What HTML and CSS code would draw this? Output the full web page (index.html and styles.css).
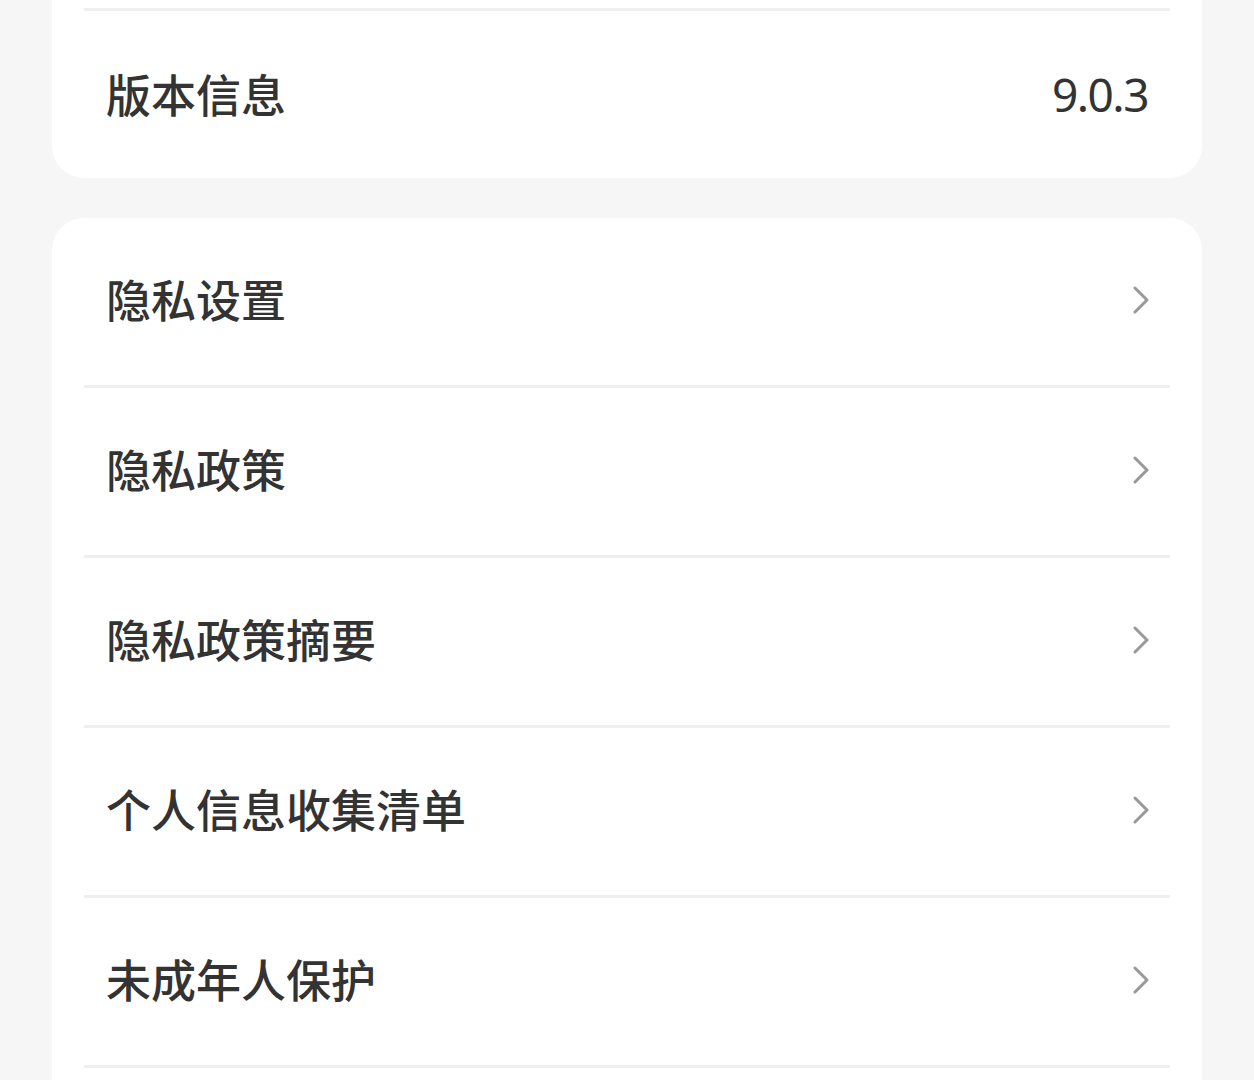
FILE: index.html
```html
<!DOCTYPE html>
<html lang="zh-CN">
<head>
<meta charset="utf-8">
<link rel="stylesheet" href="styles.css">
</head>
<body>
<div class="page">
  <section class="card card-top">
    <div class="divider"></div>
    <div class="row">
      <span class="label">版本信息</span>
      <span class="value">9.0.3</span>
    </div>
  </section>
  <section class="card card-list">
    <div class="row">
      <span class="label">隐私设置</span>
      <svg class="chev" viewBox="0 0 18 28" width="18" height="28"><polyline points="3,2 15,14 3,26" fill="none" stroke="#999999" stroke-width="3" stroke-linecap="round" stroke-linejoin="round"/></svg>
    </div>
    <div class="divider"></div>
    <div class="row">
      <span class="label">隐私政策</span>
      <svg class="chev" viewBox="0 0 18 28" width="18" height="28"><polyline points="3,2 15,14 3,26" fill="none" stroke="#999999" stroke-width="3" stroke-linecap="round" stroke-linejoin="round"/></svg>
    </div>
    <div class="divider"></div>
    <div class="row">
      <span class="label">隐私政策摘要</span>
      <svg class="chev" viewBox="0 0 18 28" width="18" height="28"><polyline points="3,2 15,14 3,26" fill="none" stroke="#999999" stroke-width="3" stroke-linecap="round" stroke-linejoin="round"/></svg>
    </div>
    <div class="divider"></div>
    <div class="row">
      <span class="label">个人信息收集清单</span>
      <svg class="chev" viewBox="0 0 18 28" width="18" height="28"><polyline points="3,2 15,14 3,26" fill="none" stroke="#999999" stroke-width="3" stroke-linecap="round" stroke-linejoin="round"/></svg>
    </div>
    <div class="divider"></div>
    <div class="row">
      <span class="label">未成年人保护</span>
      <svg class="chev" viewBox="0 0 18 28" width="18" height="28"><polyline points="3,2 15,14 3,26" fill="none" stroke="#999999" stroke-width="3" stroke-linecap="round" stroke-linejoin="round"/></svg>
    </div>
    <div class="divider"></div>
  </section>
</div>
</body>
</html>
```
FILE: styles.css
```css
html, body {
  margin: 0;
  padding: 0;
  background: #f6f6f6;
  height: 1080px;
  overflow: hidden;
}
.page {
  padding: 0 52px;
  display: flex;
  flex-direction: column;
  gap: 40px;
  font-family: "Noto Sans CJK SC", "Noto Sans", sans-serif;
  color: #333333;
}
.card {
  background: #ffffff;
  border-radius: 32px;
  padding: 0 32px;
}
.card-top {
  border-radius: 0 0 32px 32px;
  padding-top: 8px;
}
.card-list {
  padding-bottom: 60px;
}
.divider {
  height: 3px;
  background: #efefef;
}
.row {
  height: 167px;
  display: flex;
  align-items: center;
  justify-content: space-between;
  padding: 0 20px 0 22px;
}
.card-top .row {
  padding-top: 4px;
  height: 163px;
}
.label {
  font-size: 45px;
  font-weight: 500;
  line-height: 1;
  margin-top: -6px;
}
.value {
  font-family: "Noto Sans", sans-serif;
  font-size: 46px;
  font-weight: 400;
  letter-spacing: -1.5px;
  line-height: 1;
  margin-top: -6px;
  margin-right: 2px;
}
.chev {
  display: block;
  margin-top: -4px;
}
```
